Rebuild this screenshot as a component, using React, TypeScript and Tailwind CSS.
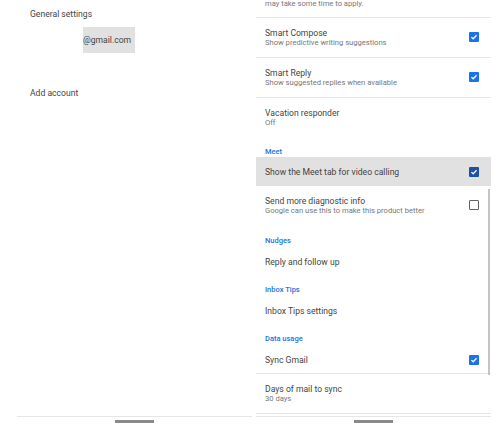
import React from 'react';

const font = { fontFamily: 'Roboto, "Noto Sans", Arial, sans-serif' };

const Check = ({ on, dark }: { on: boolean; dark?: boolean }) =>
  on ? (
    <div className={`w-[10px] h-[10px] rounded-[1px] flex items-center justify-center ${dark ? 'bg-[#1c4fa6]' : 'bg-[#1a73e8]'}`}>
      <svg width="10" height="10" viewBox="0 0 10 10">
        <polyline points="2.4,5.1 4.2,6.8 7.6,3.3" fill="none" stroke="white" strokeWidth="1.3" />
      </svg>
    </div>
  ) : (
    <div className="w-[10px] h-[10px] rounded-[1px] border-[1.5px] border-[#5f6368]" />
  );

const Header = ({ label }: { label: string }) => (
  <div className="h-[20px] flex items-end pb-[1px] pl-[9px]">
    <span className="text-[7.5px] leading-[8px] font-medium text-[#1a73e8]">{label}</span>
  </div>
);

const Row = ({ title, sub, check, dark, hl, h = 'h-[39px]' }: { title: string; sub?: string; check?: boolean; dark?: boolean; hl?: boolean; h?: string }) => (
  <div className={`${sub ? `${h} pt-[10px]` : 'h-[29px] items-center'} ${!sub && !hl ? 'pt-[2px]' : ''} flex pl-[9px] pr-[12px] ${hl ? 'bg-[#e1e1e1]' : ''}`}>
    <div className="flex-1 flex flex-col">
      <span className="text-[8.6px] leading-[10px] text-[#444444]">{title}</span>
      {sub && <span className="text-[7.6px] leading-[10px] text-[#777777]">{sub}</span>}
    </div>
    {check !== undefined && (
      <div className={sub ? 'pt-[4px]' : ''}>
        <Check on={check} dark={dark} />
      </div>
    )}
  </div>
);

const Divider = () => <div className="h-px bg-[#e6e6e6]" />;

export default function App() {
  return (
    <div className="w-[500px] h-[428px] bg-white flex overflow-hidden" style={font}>
      {/* left phone */}
      <div className="w-[250px] h-full flex flex-col">
        <div className="pl-[30px] pt-[9px] text-[8.6px] leading-[10px] text-[#444444]">General settings</div>
        <div className="pl-[83px] pt-[8px]">
          <div className="w-[52px] h-[26px] bg-[#e1e1e1] flex items-center text-[8.6px] text-[#444444]">@gmail.com</div>
        </div>
        <div className="pl-[30px] pt-[35px] text-[8.6px] leading-[10px] text-[#444444]">Add account</div>
        <div className="flex-1" />
        <div className="ml-[17px] mr-[-2px] h-px bg-[#e6e6e6]" />
        <div className="h-[11px] flex justify-center pt-[3px] pl-[19px]">
          <div className="w-[39px] h-[3px] bg-[#8a8a8a]" />
        </div>
      </div>

      {/* right phone */}
      <div className="w-[250px] h-full pl-[6px] pr-[9px] flex flex-col relative">
        <div className="h-[17px] pl-[9px] overflow-hidden">
          <div className="mt-[-1px] text-[7.6px] leading-[10px] text-[#777777]">may take some time to apply.</div>
        </div>
        <Divider />
        <Row title="Smart Compose" sub="Show predictive writing suggestions" check={true} />
        <Divider />
        <Row title="Smart Reply" sub="Show suggested replies when available" check={true} />
        <Divider />
        <Row title="Vacation responder" sub="Off" />
        <Header label="Meet" />
        <Row title="Show the Meet tab for video calling" check={true} dark hl />
        <Row title="Send more diagnostic info" sub="Google can use this to make this product better" check={false} h="h-[40px]" />
        <Header label="Nudges" />
        <Row title="Reply and follow up" />
        <Header label="Inbox Tips" />
        <Row title="Inbox Tips settings" />
        <Header label="Data usage" />
        <Row title="Sync Gmail" check={true} />
        <Divider />
        <Row title="Days of mail to sync" sub="30 days" />
        <Divider />
        <div className="h-[2px]" />
        <Divider />
        <div className="h-[11px] flex justify-center pt-[3px]">
          <div className="w-[39px] h-[3px] bg-[#8a8a8a]" />
        </div>
        <div className="absolute left-[238px] top-[189px] w-[2px] h-[186px] bg-[#c4c4c4]" />
      </div>
    </div>
  );
}
